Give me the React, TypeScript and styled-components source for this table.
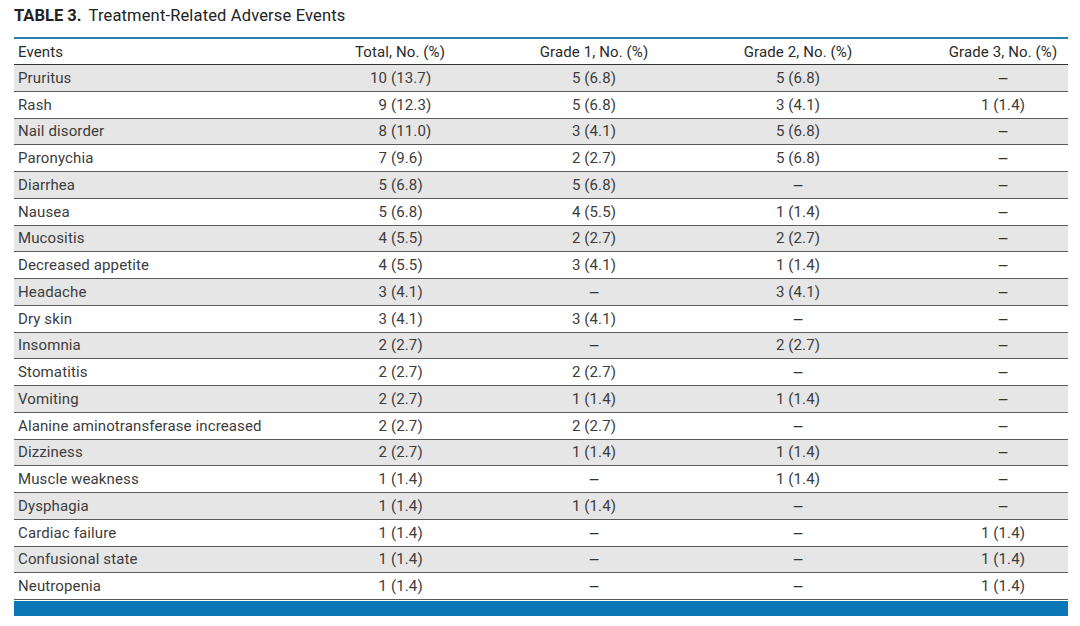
import React from "react";
import styled, { createGlobalStyle } from "styled-components";

const GlobalStyle = createGlobalStyle`
  html, body {
    margin: 0;
    padding: 0;
    background: #ffffff;
  }
  body {
    font-family: Roboto, "Liberation Sans", Arial, sans-serif;
    color: #333333;
  }
`;

const Page = styled.div`
  width: 1080px;
  height: 626px;
  padding: 6px 12px 0 14px;
  box-sizing: border-box;
  overflow: hidden;
`;

const Caption = styled.div`
  font-size: 16.5px;
  line-height: 20px;
  letter-spacing: 0.15px;
  color: #222222;
  height: 31px;
  white-space: nowrap;
`;

const CaptionLabel = styled.span`
  font-weight: 700;
  letter-spacing: 0;
  margin-right: 7px;
`;

const Table = styled.div`
  width: 1054px;
  border-top: 2px solid #2a80ad;
`;

const Row = styled.div<{ $shaded?: boolean; $head?: boolean }>`
  display: grid;
  grid-template-columns: 256px 260px 128px 280px 130px;
  height: ${(p) => (p.$head ? "25px" : "25.75px")};
  align-items: center;
  background: ${(p) => (p.$shaded ? "#e6e6e6" : "#ffffff")};
  border-bottom: 1px solid ${(p) => (p.$head ? "#333333" : "#5a5a5a")};
  font-size: 15px;
  letter-spacing: 0.12px;
  color: ${(p) => (p.$head ? "#2a2a2a" : "#3c3c3c")};
`;

const NameCell = styled.div`
  padding-left: 4px;
  white-space: nowrap;
`;

const Cell = styled.div`
  text-align: center;
  white-space: nowrap;
`;

const TotalBox = styled.span`
  display: inline-block;
  width: 60px;
  text-align: left;
`;

const Ghost = styled.span`
  visibility: hidden;
`;

const DashMark = styled.span`
  font-size: 13px;
  font-weight: 500;
  color: #333333;
`;

const FootBar = styled.div`
  height: 15px;
  margin-top: 1px;
  background: #0a78b4;
`;

type Ev = [string, string, string, string, string];

const DASH = "—";

const rows: Ev[] = [
  ["Pruritus", "10 (13.7)", "5 (6.8)", "5 (6.8)", DASH],
  ["Rash", "9 (12.3)", "5 (6.8)", "3 (4.1)", "1 (1.4)"],
  ["Nail disorder", "8 (11.0)", "3 (4.1)", "5 (6.8)", DASH],
  ["Paronychia", "7 (9.6)", "2 (2.7)", "5 (6.8)", DASH],
  ["Diarrhea", "5 (6.8)", "5 (6.8)", DASH, DASH],
  ["Nausea", "5 (6.8)", "4 (5.5)", "1 (1.4)", DASH],
  ["Mucositis", "4 (5.5)", "2 (2.7)", "2 (2.7)", DASH],
  ["Decreased appetite", "4 (5.5)", "3 (4.1)", "1 (1.4)", DASH],
  ["Headache", "3 (4.1)", DASH, "3 (4.1)", DASH],
  ["Dry skin", "3 (4.1)", "3 (4.1)", DASH, DASH],
  ["Insomnia", "2 (2.7)", DASH, "2 (2.7)", DASH],
  ["Stomatitis", "2 (2.7)", "2 (2.7)", DASH, DASH],
  ["Vomiting", "2 (2.7)", "1 (1.4)", "1 (1.4)", DASH],
  ["Alanine aminotransferase increased", "2 (2.7)", "2 (2.7)", DASH, DASH],
  ["Dizziness", "2 (2.7)", "1 (1.4)", "1 (1.4)", DASH],
  ["Muscle weakness", "1 (1.4)", DASH, "1 (1.4)", DASH],
  ["Dysphagia", "1 (1.4)", "1 (1.4)", DASH, DASH],
  ["Cardiac failure", "1 (1.4)", DASH, DASH, "1 (1.4)"],
  ["Confusional state", "1 (1.4)", DASH, DASH, "1 (1.4)"],
  ["Neutropenia", "1 (1.4)", DASH, DASH, "1 (1.4)"],
];

const Value = ({ value }: { value: string }) =>
  value === DASH ? <DashMark>{DASH}</DashMark> : <>{value}</>;

// total column keeps the "(" aligned, so single counts get a hidden digit in front
const Total = ({ value }: { value: string }) => {
  const count = value.split(" ")[0];
  return (
    <TotalBox>
      {count.length < 2 && <Ghost>0</Ghost>}
      {value}
    </TotalBox>
  );
};

const App = () => {
  return (
    <Page>
      <GlobalStyle />
      <Caption>
        <CaptionLabel>TABLE 3.</CaptionLabel>
        Treatment-Related Adverse Events
      </Caption>
      <Table>
        <Row $head>
          <NameCell>Events</NameCell>
          <Cell>Total, No. (%)</Cell>
          <Cell>Grade 1, No. (%)</Cell>
          <Cell>Grade 2, No. (%)</Cell>
          <Cell>Grade 3, No. (%)</Cell>
        </Row>
        {rows.map((r, i) => (
          <Row key={r[0]} $shaded={i % 2 === 0}>
            <NameCell>{r[0]}</NameCell>
            <Cell>
              <Total value={r[1]} />
            </Cell>
            <Cell>
              <Value value={r[2]} />
            </Cell>
            <Cell>
              <Value value={r[3]} />
            </Cell>
            <Cell>
              <Value value={r[4]} />
            </Cell>
          </Row>
        ))}
      </Table>
      <FootBar />
    </Page>
  );
};

export default App;
